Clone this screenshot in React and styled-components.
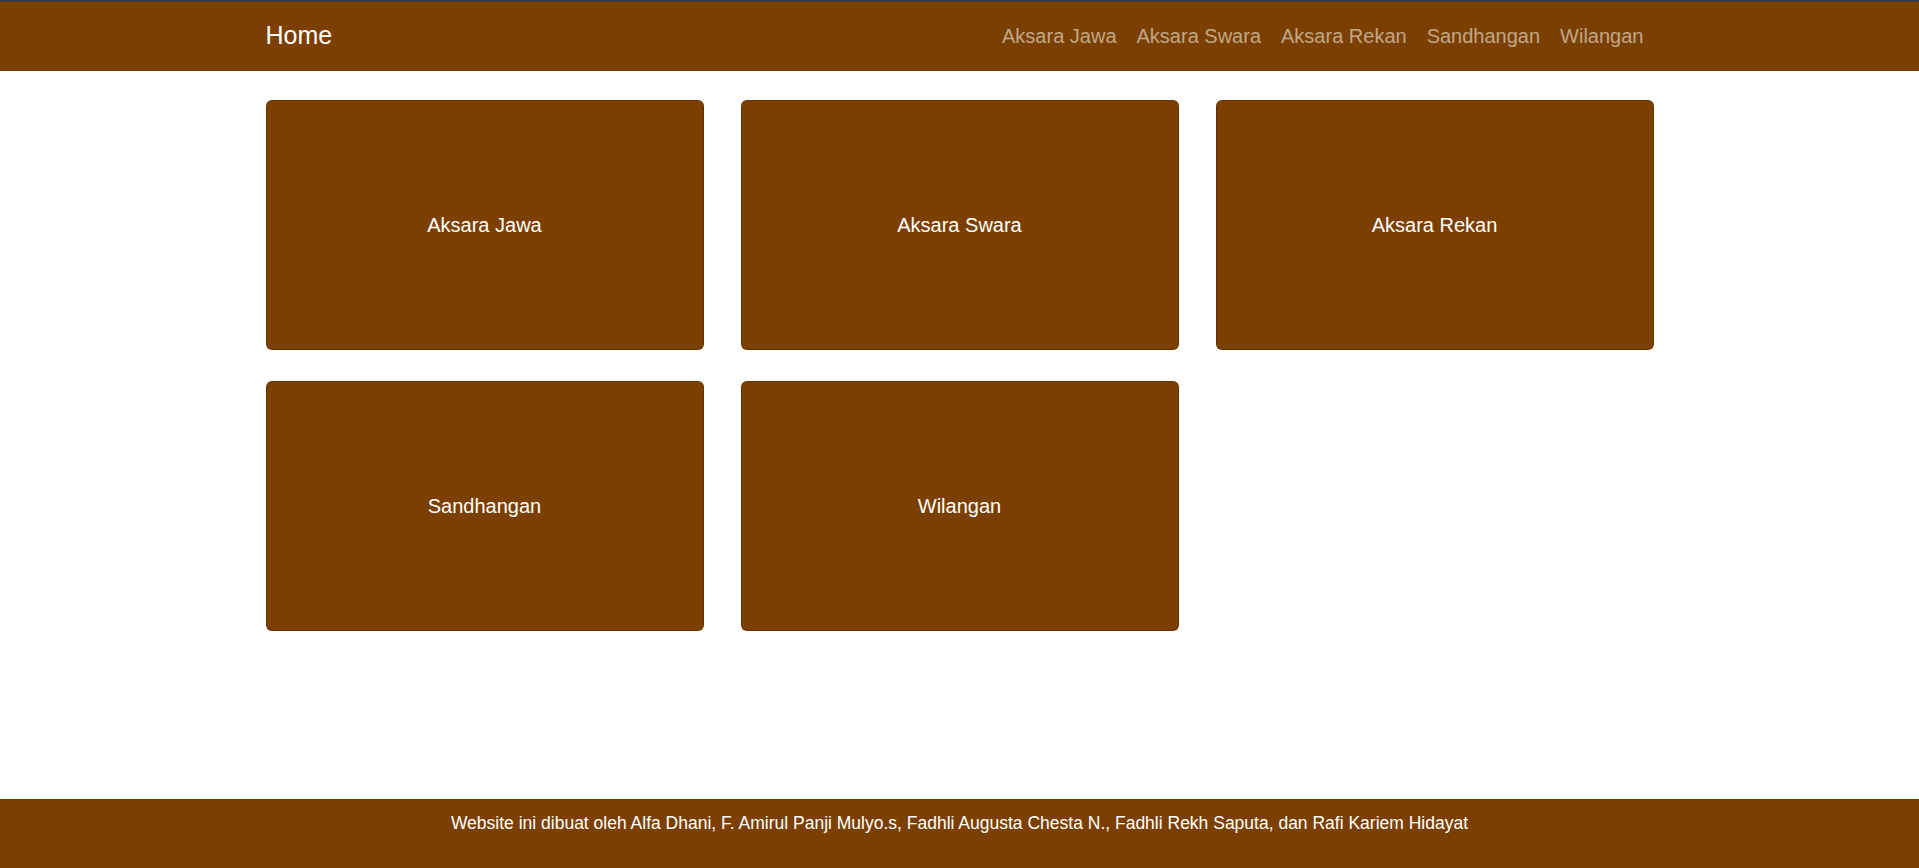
import React from "react";
import styled, { createGlobalStyle } from "styled-components";

const GlobalStyle = createGlobalStyle`
  * { box-sizing: border-box; }
  body {
    margin: 0;
    font-family: "Liberation Sans", Arial, sans-serif;
    background: #fff;
  }
`;

const menu = ["Aksara Jawa", "Aksara Swara", "Aksara Rekan", "Sandhangan", "Wilangan"];

const App = () => {
  return (
    <Page>
      <GlobalStyle />
      <Navbar>
        <Container>
          <Brand href="#">Home</Brand>
          <NavLinks>
            {menu.map((item) => (
              <NavLink key={item} href="#">
                {item}
              </NavLink>
            ))}
          </NavLinks>
        </Container>
      </Navbar>
      <Main>
        <Cards>
          {menu.map((item) => (
            <Card key={item} href="#">
              {item}
            </Card>
          ))}
        </Cards>
      </Main>
      <Footer>
        Website ini dibuat oleh Alfa Dhani, F. Amirul Panji Mulyo.s, Fadhli Augusta Chesta N., Fadhli Rekh
        Saputa, dan Rafi Kariem Hidayat
      </Footer>
    </Page>
  );
};

const Page = styled.div`
  min-height: 100vh;
  display: flex;
  flex-direction: column;
`;

const Navbar = styled.nav`
  background: #7b3f00;
  border-top: 2px solid #3b3a48;
  height: 71px;
  display: flex;
  align-items: center;
`;

const Container = styled.div`
  width: 1388px;
  margin: 0 auto;
  display: flex;
  align-items: center;
  justify-content: space-between;
`;

const Brand = styled.a`
  color: #fff;
  font-size: 25px;
  margin-top: -2px;
  text-decoration: none;
`;

const NavLinks = styled.div`
  display: flex;
`;

const NavLink = styled.a`
  color: rgba(255, 255, 255, 0.55);
  font-size: 20px;
  padding: 0 10px;
  text-decoration: none;
`;

const Main = styled.main`
  flex: 1;
`;

const Cards = styled.div`
  width: 1388px;
  margin: 29px auto 0;
  display: grid;
  grid-template-columns: repeat(3, 438px);
  column-gap: 37px;
  row-gap: 31px;
`;

const Card = styled.a`
  height: 250px;
  background: #7b3f00;
  border: 1px solid rgba(0, 0, 0, 0.175);
  border-radius: 6px;
  color: #fff;
  font-size: 20px;
  text-decoration: none;
  display: flex;
  align-items: center;
  justify-content: center;
`;

const Footer = styled.footer`
  background: #7b3f00;
  color: #fff;
  height: 69px;
  padding-top: 14px;
  text-align: center;
  font-size: 17.5px;
`;

export default App;
